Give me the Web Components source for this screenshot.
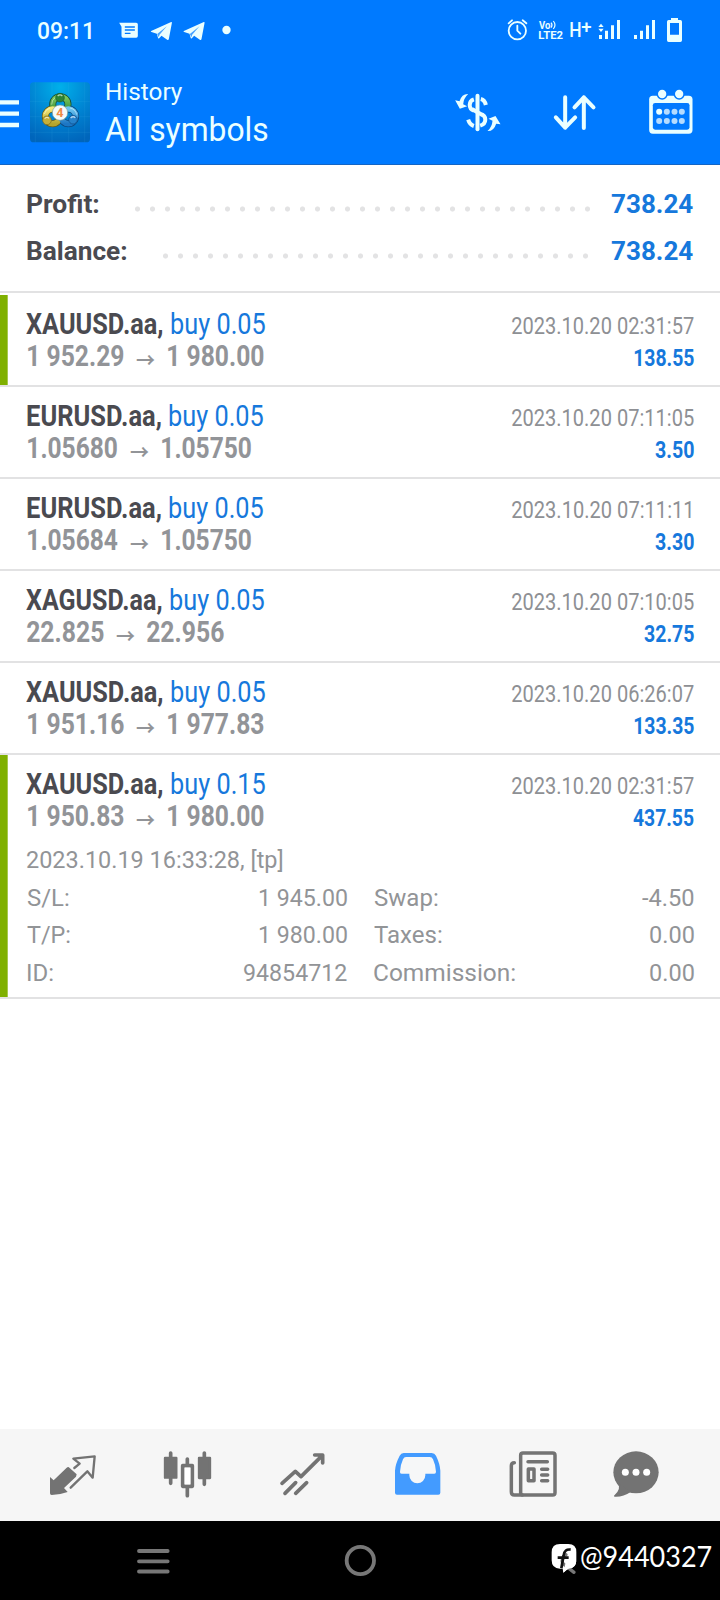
<!DOCTYPE html>
<html lang="en">
<head>
<meta charset="utf-8">
<title>History</title>
<style>
html,body{margin:0;padding:0;background:#fff}
body{font-family:Roboto,"Liberation Sans",sans-serif}
</style>
</head>
<body>
<trade-app></trade-app>
<script>
const define=(name,html,setup)=>{
  const t=document.createElement('template');t.innerHTML=html;
  customElements.define(name,class extends HTMLElement{
    connectedCallback(){
      if(this.shadowRoot)return;
      this.attachShadow({mode:'open'}).append(t.content.cloneNode(true));
      if(setup)setup.call(this,this.shadowRoot);
    }
  });
};

/* Text squeezed to a given visible width: ink = width, size = px, weight = 400|700 */
const ctx=document.createElement('canvas').getContext('2d');
define('fit-text',`<style>
:host{display:inline-block;flex:none;white-space:pre}
span{display:inline-block;transform-origin:0 50%;white-space:pre}
</style><span><slot></slot></span>`,function(r){
  const size=+this.getAttribute('size'),ink=+this.getAttribute('ink'),w=this.getAttribute('weight')||400;
  const fam=this.getAttribute('family')||'Roboto';
  ctx.font=`${w} ${size}px "${fam}", sans-serif`;
  const m=ctx.measureText(this.textContent);
  const s=ink/(m.actualBoundingBoxLeft+m.actualBoundingBoxRight);
  this.style.cssText+=`;width:${ink}px;font:${w} ${size}px/32px "${fam}",sans-serif;`;
  r.querySelector('span').style.transform=`translateX(${m.actualBoundingBoxLeft*s}px) scaleX(${s})`;
});

define('status-bar',`<style>
:host{display:flex;height:60px;align-items:flex-start;color:#eaffff}
svg{display:block;flex:none}
.l{margin-left:37.5px;margin-top:15px;display:block}
.n{margin-left:27.500px}
.r{margin-left:auto;margin-right:18px}
</style>
<fit-text class="l" size="24" weight="500" ink="52.5">09:11</fit-text>
<svg class="n" width="120" height="60" viewBox="353.5 0 360 180" fill="#eaffff">
 <path fill-rule="evenodd" d="M357 68H408Q413 68 413 73V108Q413 113 408 113H369Q364 113 364 108V80ZM374 79V83H404V79ZM374 88V92H404V88ZM374 98V102H391V98Z"/>
 <g><path d="M453 93L513 66Q516 65 515 70L506 117Q505 121 501 119L484 107L477 115Q474 117 473 112L470 101L454 96Q450 95 453 93Z"/><path d="M471 102L500 79L478 104L476 112Z" fill="#007aff" opacity=".7"/></g>
 <g transform="translate(98 0)"><path d="M453 93L513 66Q516 65 515 70L506 117Q505 121 501 119L484 107L477 115Q474 117 473 112L470 101L454 96Q450 95 453 93Z"/><path d="M471 102L500 79L478 104L476 112Z" fill="#007aff" opacity=".7"/></g>
 <circle cx="679" cy="90" r="12.5"/>
</svg>
<svg class="r" width="202" height="60" viewBox="180 0 606 180" fill="#eaffff">
 <g fill="none" stroke="#eaffff" stroke-width="5.5" stroke-linecap="round"><circle cx="232" cy="92" r="26"/><path d="M206 70L216 61M248 61L259 70M232 77V92L241 101"/></g>
 <text x="297" y="86" font-family="Roboto" font-size="30" font-weight="700" textLength="34" lengthAdjust="spacingAndGlyphs">Vo</text>
 <path d="M333 68Q339 75 333 83M340 63Q350 75 340 87" fill="none" stroke="#eaffff" stroke-width="3.5"/>
 <text x="295" y="117" font-family="Roboto" font-size="30" font-weight="700" textLength="74" lengthAdjust="spacingAndGlyphs">LTE2</text>
 <text x="388" y="110" font-family="Roboto" font-size="59" font-weight="500" textLength="37" lengthAdjust="spacingAndGlyphs">H</text>
 <text x="424" y="98" font-family="Roboto" font-size="54" font-weight="500" textLength="31" lengthAdjust="spacingAndGlyphs">+</text>
 <path d="M475 81L483 71L491 81ZM475 86L483 96L491 86ZM477 105h9v12h-9zM495 92h9v25h-9zM513 76h9v41h-9zM531 60h9v57h-9z"/>
 <path d="M582 105h9v12h-9zM600 92h9v25h-9zM618 76h9v41h-9zM636 60h9v57h-9z"/>
 <path fill-rule="evenodd" d="M693 60V54H714V60H721Q726 60 726 65V121Q726 126 721 126H686Q681 126 681 121V65Q681 60 686 60ZM690 69V104H717V69Z"/>
</svg>`);

define('app-bar',`<style>
:host{display:flex;height:103.5px;border-bottom:1.5px solid #1465c4;align-items:flex-start;color:#eaffff}
svg{display:block;flex:none}
.logo{margin:22px 0 0 11px}
.menu{margin-top:40px}
.t{display:flex;flex-direction:column;margin:16px 0 0 16px;height:80px}
.t fit-text+fit-text{margin:6px 0 0 -.7px}
.a{margin-left:auto}
</style>
<svg class="menu" width="19" height="28" viewBox="0 300 57 84"><path d="M0 300.500H57V313.500H0ZM0 334.500H57V347.500H0ZM0 368.500H57V381.500H0Z" fill="#eaffff"/></svg>
<svg class="logo" width="60" height="61" viewBox="90 246 180 183">
 <defs><radialGradient id="b" cx=".5" cy=".08" r=".95"><stop offset="0" stop-color="#00b0ea"/><stop offset=".55" stop-color="#0083d2"/><stop offset="1" stop-color="#0065bb"/></radialGradient>
 <linearGradient id="g" x2="0" y2="1"><stop stop-color="#7ecb5c"/><stop offset="1" stop-color="#2f8535"/></linearGradient>
 <linearGradient id="y" x2="0" y2="1"><stop stop-color="#f3e777"/><stop offset="1" stop-color="#b5a52c"/></linearGradient>
 <linearGradient id="u" x2="0" y2="1"><stop stop-color="#6cc6f0"/><stop offset="1" stop-color="#1d76c4"/></linearGradient></defs>
 <rect x="90" y="247" width="180" height="180" rx="11" fill="url(#b)"/>
 <path d="M106 247V427M156 247V427M206 247V427M254 247V427M90 304H270M90 350H270M90 397H270" stroke="#5ac8f5" stroke-opacity=".2" stroke-width="1.5"/>
 <g fill="none" stroke-width="21"><circle cx="181" cy="313" r="23" stroke="#174f35"/><circle cx="158" cy="349" r="22" stroke="#645c1b"/><circle cx="205" cy="349" r="22" stroke="#0b4880"/></g>
 <g fill="none" stroke-width="16.5"><circle cx="181" cy="313" r="23" stroke="url(#g)"/><circle cx="158" cy="349" r="22" stroke="url(#y)"/><circle cx="205" cy="349" r="22" stroke="url(#u)"/></g>
 <g fill="none" stroke="#fff" stroke-opacity=".45" stroke-width="3"><path d="M155 314A27 27 0 0 1 166 292M133 342A25 25 0 0 1 150 324M210 324A25 25 0 0 1 230 344"/></g>
 <circle cx="180" cy="293" r="13" fill="#2c8435" stroke="#1c5a2b" stroke-width="2"/><circle cx="141" cy="361" r="13" fill="#c5b039" stroke="#74671c" stroke-width="2"/><circle cx="219" cy="359" r="13" fill="#2582cb" stroke="#0d4a87" stroke-width="2"/>
 <path d="M173 288Q180 281 187 288M134 356Q140 349 147 355M212 354Q219 347 226 353" fill="none" stroke="#fff" stroke-opacity=".65" stroke-width="4"/>
 <circle cx="180" cy="338" r="23" fill="#f5fbfa" stroke="#7b9b94" stroke-width="2"/>
 <text x="180" y="351" text-anchor="middle" font-family="Roboto" font-weight="700" font-size="38" fill="#f08a45">4</text>
</svg>
<div class="t"><fit-text size="24" ink="77">History</fit-text><fit-text size="32.5" ink="163">All symbols</fit-text></div>
<svg class="a" width="265" height="60" style="margin-top:22px;margin-right:2px" viewBox="38.5 246 795 180">
 <g fill="none" stroke="#eaffff" stroke-width="12">
  <path d="M112 287V388" stroke-linecap="round"/>
  <path d="M101 298C85 303 84 326 101 332M122 297C130 299 135 305 137 315"/>
  <path d="M95 327L128 346M120 342C141 347 140 371 120 377M101 378C92 375 87 369 84 359"/>
 </g>
 <path fill="#eaffff" d="M84 282Q65 281 58 304L45 301L59 326L81 319L69 313Q70 295 84 282ZM142 393Q161 394 168 371L181 373L166 348L145 356L157 362Q156 380 142 393Z"/>
 <path d="M375 292V383M347 352L375 383L405 352M431 384V292M403 322L431 292L460 322" fill="none" stroke="#eaffff" stroke-width="12" stroke-linecap="round" stroke-linejoin="round"/>
 <rect x="627" y="287" width="130" height="114" rx="11" fill="#eaffff"/>
 <g fill="#007aff"><circle cx="666" cy="282" r="17"/><circle cx="717" cy="282" r="17"/><rect x="638" y="309" width="110" height="80" rx="7"/></g>
 <g fill="#eaffff"><circle cx="666" cy="282" r="12.500"/><circle cx="717" cy="282" r="12.500"/><circle cx="657" cy="335" r="9"/></g>
 <g fill="#b5dcff"><circle cx="680" cy="335" r="9"/><circle cx="703" cy="335" r="9"/><circle cx="725" cy="335" r="9"/><circle cx="657" cy="363" r="9"/><circle cx="680" cy="363" r="9"/><circle cx="703" cy="363" r="9"/><circle cx="725" cy="363" r="9"/></g>
</svg>`);

class TotalLine extends HTMLElement{
  connectedCallback(){
    if(this.shadowRoot)return;
    const a=n=>this.getAttribute(n);
    this.attachShadow({mode:'open'}).innerHTML=`<style>
:host{display:flex;height:32px;padding:0 26.2px 0 26.8px;color:#4a4a50}
i{display:block;flex:none;width:${a('dots')*15}px;margin:18px ${a('gap')}px 0 auto;height:6px;background:radial-gradient(circle at 7.5px 3px,#e3e3e4 2.2px,transparent 2.9px) 0 0/15px 6px}
.v{color:#1678dc}
</style><fit-text size="25.8" weight="700" ink="${a('ink')}">${a('label')}</fit-text><i></i><fit-text class="v" size="25.8" weight="700" ink="82.5">${a('value')}</fit-text>`;
  }
}
customElements.define('total-line',TotalLine);

/* m: symbol width, gap, left inset.  p: price inset, width, gaps round the arrow.
   ti: time width and right inset. */
class DealRow extends HTMLElement{
  connectedCallback(){
    if(this.shadowRoot)return;
    const a=n=>this.getAttribute(n);
    const [si,gap,left]=a('m').split(' '),[pl,pi,g1,g2]=a('p').split(' '),[ti,tr]=(a('ti')||'182 0').split(' ');
    this.attachShadow({mode:'open'}).innerHTML=`<style>
:host{display:block;box-sizing:border-box;min-height:92px;border-bottom:2px solid #e2e2e3;padding:13px 26.4px 0 0}
:host([mark]){background:linear-gradient(#7fb000,#7fb000) 0 0/7.7px 100% no-repeat}
.r{display:flex;align-items:baseline;height:32px}
.s{color:#4a4a50;margin-left:${left}px}.b{color:#1678dc;margin-left:${gap}px}
.d{color:#8e9094;margin:0 ${tr}px 0 auto}.p{color:#929498}
.v{color:#1678dc;margin-left:auto}
.ar{position:relative;top:2px;margin:0 ${g2}px 0 ${g1}px}
</style>
<div class="r"><fit-text class="s" size="28.8" weight="700" ink="${si}">${a('symbol')}</fit-text><fit-text class="b" size="28.8" ink="94.6">${a('volume')}</fit-text><fit-text class="d" size="23.6" ink="${ti}">${a('time')}</fit-text></div>
<div class="r"><fit-text class="p" style="margin-left:${pl}px" size="28.8" weight="700" ink="${pi}">${a('from')}</fit-text><fit-text class="p ar" family="Noto Sans CJK SC" weight="700" size="20" ink="19">→</fit-text><fit-text class="p" size="28.8" weight="700" ink="${pi}">${a('to')}</fit-text><fit-text class="v" size="23.6" weight="700" ink="${a('vi')}">${a('profit')}</fit-text></div>
<slot></slot>`;
  }
}
customElements.define('deal-row',DealRow);

define('deal-details',`<style>
:host{display:block;box-sizing:border-box;height:165px;padding:12.3px 0 0 26.5px;color:#929497}
.o{display:block}
.g{display:grid;grid-template-columns:320px 319.5px;column-gap:27.2px;margin-top:5.7px;row-gap:5.4px}
.g div{display:flex;justify-content:space-between;height:32px}
</style>
<fit-text class="o" size="23.6" ink="255.5">2023.10.19 16:33:28, [tp]</fit-text>
<div class="g">
<div><fit-text size="23.6" ink="42">S/L:</fit-text><fit-text size="23.6" ink="87.7">1 945.00</fit-text></div>
<div><fit-text size="23.6" ink="64">Swap:</fit-text><fit-text size="23.6" ink="51.3">-4.50</fit-text></div>
<div><fit-text size="23.6" ink="43.3">T/P:</fit-text><fit-text size="23.6" ink="87.7">1 980.00</fit-text></div>
<div><fit-text size="23.6" ink="68">Taxes:</fit-text><fit-text size="23.6" ink="43.6">0.00</fit-text></div>
<div><fit-text size="23.6" ink="25.3" style="margin-left:1.3px">ID:</fit-text><fit-text size="23.6" ink="103">94854712</fit-text></div>
<div><fit-text size="23.6" ink="141.5">Commission:</fit-text><fit-text size="23.6" ink="43.6">0.00</fit-text></div>
</div>`);

define('tab-bar',`<style>
:host{display:flex;height:92px;background:#f6f6f6;align-items:center}
svg{display:block;flex:none}
</style>
<svg width="360" height="92" viewBox="0 27 1080 276" fill="#737373" stroke-linecap="round" stroke-linejoin="round">
 <path d="M150 171L161 181L200 143Q205 139 209 144L230 163L228 170L192 204L203 216L181 222L155 225Q150 225 150 220Z"/>
 <path d="M223 144L239 131L220 116L284 109L278 173L262 154L212 203" fill="none" stroke="#737373" stroke-width="7"/>
 <g stroke="#737373" stroke-width="11"><path d="M512 99V190M613 99V193M562 117V132M562 204V227"/><path fill="none" d="M548 137H577V199H548Z"/><path d="M495 114H529V173H495ZM597 114H630V174H597Z" stroke-width="7"/></g>
 <rect x="554" y="143" width="17" height="50" fill="#fff"/>
 <path d="M846 190L886 154L903 170L967 106M944 105H968V129M855 220L887 188M887 220L920 188" fill="none" stroke="#737373" stroke-width="11"/>
</svg>
<svg width="360" height="92" viewBox="0 27 1080 276" fill="#737373" stroke-linecap="round" stroke-linejoin="round">
 <path fill="#439bff" d="M131 99H215Q224 99 228 107Q240 132 241 152V218Q241 224 235 224H111Q105 224 105 218V152Q106 132 119 107Q123 99 131 99Z"/>
 <path fill="#f6f7f8" d="M138 111H209Q216 111 219 118Q227 135 228 155Q228 161 223 161H196V166A24 24 0 0 1 148 166V161H125Q119 161 120 155Q121 135 129 118Q132 111 138 111Z"/>
 <g fill="none" stroke="#737373" stroke-width="10.500"><rect x="482" y="99" width="103" height="126" rx="7"/><path d="M463 128Q454 128 454 137V215Q454 225 463 225H487M504 125H562M545 148H563M545 165H563M545 182H563"/><path d="M505 147H522V182H505Z"/></g>
 <ellipse cx="828" cy="157" rx="68" ry="63"/><path d="M772 188Q786 206 762 227Q761 230 765 230Q790 231 812 216Z"/>
 <g fill="#fff"><circle cx="796" cy="157" r="10.500"/><circle cx="828" cy="157" r="10.500"/><circle cx="860" cy="157" r="10.500"/></g>
</svg>`);

define('nav-bar',`<style>
:host{display:flex;height:79px;background:#000;color:#fff}
svg{display:block;flex:none}
fit-text{margin:19px 0 0 3.5px}
</style>
<svg width="577.5" height="79" viewBox="0 303 1732.5 237" fill="none" stroke="#777" stroke-width="11.5" stroke-linecap="round">
 <path d="M417 393H503M417 424H503M417 454.500H503"/><circle cx="1081" cy="421.500" r="41"/>
 <path fill="#fff" stroke="none" d="M1680 372H1705Q1729 372 1729 396V420Q1729 445 1706 446Q1701 447 1690 458L1688 446H1680Q1655 446 1655 421V397Q1655 372 1680 372Z"/>
 <path stroke="#777" stroke-width="10" d="M1698 404Q1682 416 1688 430L1722 457"/>
 <path fill="#fff" stroke="none" d="M1698 422L1729 422Q1727 443 1706 446Q1701 447 1690 458Z"/>
 <path stroke="#111" stroke-width="8" stroke-linecap="butt" d="M1712 389Q1694 386 1691 406L1684 445M1673 413H1706"/>
</svg>
<fit-text family="Lato" size="28" ink="131">@9440327</fit-text>`);

define('trade-app',`<style>
:host{display:flex;flex-direction:column;width:720px;height:1600px;overflow:hidden;background:#fff}
header{background:#007aff;height:165px;flex:none}
.sum{box-sizing:border-box;height:128px;padding-top:23px;border-bottom:2px solid #e2e2e3;flex:none;margin-bottom:2px}
.sum total-line+total-line{margin-top:15px}
main{flex:1;min-height:0}
tab-bar,nav-bar{flex:none}
</style>
<header><status-bar></status-bar><app-bar></app-bar></header>
<section class="sum">
<total-line label="Profit:" value="738.24" ink="71.5" dots="31" gap="16.3"></total-line>
<total-line label="Balance:" value="738.24" ink="99.3" dots="29" gap="18.3"></total-line>
</section>
<main>
<deal-row mark m="136.6 8 26.3" p="27.7 96 12.3 12.7" symbol="XAUUSD.aa," volume="buy 0.05" time="2023.10.20 02:31:57" from="1 952.29" to="1 980.00" profit="138.55" vi="60"></deal-row>
<deal-row m="134 8 26.8" p="28 89.5 12.5 13" symbol="EURUSD.aa," volume="buy 0.05" time="2023.10.20 07:11:05" from="1.05680" to="1.05750" profit="3.50" vi="39"></deal-row>
<deal-row m="134 8 26.8" p="28 89.5 12.5 13" ti="179 3" symbol="EURUSD.aa," volume="buy 0.05" time="2023.10.20 07:11:11" from="1.05684" to="1.05750" profit="3.30" vi="39"></deal-row>
<deal-row m="135.6 8.2 26.3" p="26.5 76.9 12.3 12" symbol="XAGUSD.aa," volume="buy 0.05" time="2023.10.20 07:10:05" from="22.825" to="22.956" profit="32.75" vi="50"></deal-row>
<deal-row m="136.6 8 26.3" p="27.7 96 12.3 12.7" symbol="XAUUSD.aa," volume="buy 0.05" time="2023.10.20 06:26:07" from="1 951.16" to="1 977.83" profit="133.35" vi="60"></deal-row>
<deal-row mark m="136.6 8 26.3" p="27.7 96 12.3 12.7" symbol="XAUUSD.aa," volume="buy 0.15" time="2023.10.20 02:31:57" from="1 950.83" to="1 980.00" profit="437.55" vi="60.6"><deal-details></deal-details></deal-row>
</main>
<tab-bar></tab-bar><nav-bar></nav-bar>`);
</script>
</body>
</html>
